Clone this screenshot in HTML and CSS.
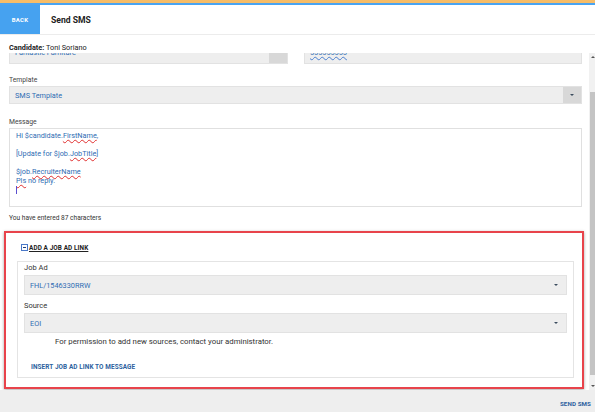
FILE: index.html
```html
<!DOCTYPE html>
<html>
<head>
<meta charset="utf-8">
<title>Send SMS</title>
<link rel="stylesheet" href="styles.css">
</head>
<body>
<div class="app">
  <header class="topbar">
    <div class="back">BACK</div>
    <h1 class="title">Send SMS</h1>
  </header>
  <div class="candidate"><b>Candidate:</b> Toni Soriano</div>
  <div class="body">
    <div class="scroll">
      <div class="content">
        <div class="row-top">
          <div class="select top"><span class="val">Fantastic Furniture</span><span class="btn"></span></div>
          <div class="select top"><span class="val"><span class="wavy-blue">555555555</span></span></div>
        </div>

        <div class="field first">
          <div class="label">Template</div>
          <div class="select tmpl"><span class="val">SMS Template</span><span class="btn"><span class="caret"></span></span></div>
        </div>

        <div class="field">
          <div class="label">Message</div>
          <div class="textarea">
            <div class="line">Hi $candidate.<span class="wavy">FirstName</span>,</div>
            <div class="line">&nbsp;</div>
            <div class="line">[Update for $job.<span class="wavy">JobTitle</span>]</div>
            <div class="line">&nbsp;</div>
            <div class="line">$job.<span class="wavy">RecruiterName</span></div>
            <div class="line"><span class="wavy">Pls</span> no reply.</div>
            <div class="line"><span class="cursor"></span></div>
          </div>
        </div>

        <div class="counter">You have entered 87 characters</div>

        <section class="highlight">
          <div class="section-head">
            <span class="minus"></span>
            <span class="section-title">ADD A JOB AD LINK</span>
          </div>
          <div class="panel">
            <div class="plabel">Job Ad</div>
            <div class="pselect"><span class="val">FHL/1546330RRW</span><span class="caret"></span></div>
            <div class="plabel src">Source</div>
            <div class="pselect"><span class="val">EOI</span><span class="caret"></span></div>
            <div class="note">For permission to add new sources, contact your administrator.</div>
            <div class="insert">INSERT JOB AD LINK TO MESSAGE</div>
          </div>
        </section>
      </div>
    </div>
    <div class="scrollbar">
      <div class="arrow up"></div>
      <div class="track"><div class="thumb"></div></div>
      <div class="arrow down"></div>
    </div>
  </div>
  <footer class="footer">
    <span class="send">SEND SMS</span>
  </footer>
</div>
</body>
</html>
```

FILE: styles.css
```css
* { box-sizing: border-box; }
html, body { margin: 0; padding: 0; }
body {
  font-family: Roboto, "Liberation Sans", Arial, sans-serif;
  color: #333;
  background: #fff;
}
.app {
  width: 595px;
  height: 412px;
  display: flex;
  flex-direction: column;
  overflow: hidden;
}
.topbar {
  display: flex;
  align-items: stretch;
  height: 35px;
  border-top: 3px solid #f7bd68;
  box-shadow: inset 0 2px 0 #4aa4f2;
  padding-top: 2px;
  border-bottom: 1px solid #ececec;
  background: #fff;
}
.back {
  width: 40px;
  background: #46a2f0;
  color: #fff;
  font-weight: 700;
  font-size: 6px;
  letter-spacing: 0.2px;
  display: flex;
  align-items: center;
  justify-content: center;
}
.title {
  margin: 0 0 0 11px;
  font-size: 8.6px;
  font-weight: 700;
  color: #222;
  display: flex;
  align-items: center;
}
.candidate {
  height: 18px;
  padding: 8px 0 0 9px;
  font-size: 7.3px;
  line-height: 9px;
  color: #222;
  background: #fff;
}
.candidate b { font-weight: 700; }
.body {
  flex: 1;
  display: flex;
  min-height: 0;
}
.scroll {
  flex: 1;
  overflow: hidden;
}
.content {
  margin-top: -12px;
  padding: 0 7px 0 9px;
}
.row-top {
  display: grid;
  grid-template-columns: 279px 1fr;
  gap: 16px;
}
.select {
  height: 20px;
  background: #eeeeee;
  border: 1px solid #e2e2e2;
  display: flex;
  align-items: center;
  font-size: 7.3px;
  color: #2f6db3;
}
.select.top { height: 23px; }
.select .val { flex: 1; padding-left: 5px; }
.select .btn {
  width: 18px;
  align-self: stretch;
  background: #d8d8d8;
  display: flex;
  align-items: center;
  justify-content: center;
}
.wavy-blue {
  text-decoration: underline wavy #4a7fd0;
  text-decoration-thickness: 0.5px;
}
.wavy {
  text-decoration: underline wavy #e03030;
  text-decoration-thickness: 0.5px;
  text-underline-offset: 1px;
}
.field.first { margin-top: 12px; }
.field { margin-top: 14px; }
.label {
  font-size: 6.8px;
  line-height: 9px;
  color: #444;
  margin-bottom: 1px;
}
.select.tmpl { height: 18px; }
.caret {
  width: 0;
  height: 0;
  border-left: 2.5px solid transparent;
  border-right: 2.5px solid transparent;
  border-top: 2.5px solid #3b4c5e;
}
.textarea {
  height: 79px;
  border: 1px solid #e0e0e0;
  padding: 2px 6px;
  font-size: 7.3px;
  line-height: 9px;
  color: #2f6db3;
}
.cursor {
  display: inline-block;
  width: 0;
  height: 8px;
  border-left: 0.8px solid #5a4fcf;
  vertical-align: middle;
}
.counter {
  margin-top: 7px;
  font-size: 6.6px;
  line-height: 9px;
  color: #333;
}
.highlight {
  margin: 8px -2px 0 -5px;
  border: 2px solid #e8434b;
  box-shadow: 0 1px 3px rgba(0,0,0,0.35);
  padding: 10px 8px 9px 11px;
  background: #fff;
}
.section-head {
  display: flex;
  align-items: center;
  height: 9px;
  padding-left: 4px;
}
.minus {
  width: 7px;
  height: 7px;
  border: 1px solid #4a78c8;
  position: relative;
  margin-right: 1px;
  margin-top: -1px;
  background: #fff;
}
.minus::after {
  content: "";
  position: absolute;
  left: 1px;
  right: 1px;
  top: 2px;
  height: 1.2px;
  background: #1d3d7a;
}
.section-title {
  font-size: 6.4px;
  font-weight: 700;
  color: #222;
  text-decoration: underline;
  text-underline-offset: 1px;
  letter-spacing: 0.1px;
}
.panel {
  margin-top: 9px;
  border: 1px solid #e4e4e4;
  padding: 1px 6px 5px 6px;
}
.plabel {
  font-size: 7.5px;
  line-height: 10px;
  color: #333;
}
.plabel.src { margin-top: 6px; }
.pselect {
  margin-top: 2px;
  height: 20px;
  background: #eeeeee;
  border: 1px solid #e2e2e2;
  display: flex;
  align-items: center;
  padding: 0 8px 0 5px;
  font-size: 7.3px;
  color: #2f6db3;
}
.pselect .val { flex: 1; }
.note {
  margin-top: 4px;
  padding-left: 31px;
  font-size: 7.8px;
  line-height: 9px;
  color: #333;
}
.insert {
  margin-top: 17px;
  padding-left: 7px;
  font-size: 6.4px;
  line-height: 9px;
  font-weight: 700;
  color: #2c5f9e;
  letter-spacing: 0.1px;
}
.scrollbar {
  width: 6px;
  background: #f1f1f1;
  display: flex;
  flex-direction: column;
  align-items: center;
  padding: 3px 0 3px 1px;
}
.arrow {
  width: 0;
  height: 0;
  border-left: 2px solid transparent;
  border-right: 2px solid transparent;
}
.arrow.up { border-bottom: 2.5px solid #555; }
.arrow.down { border-top: 2.5px solid #555; }
.track {
  flex: 1;
  width: 100%;
  padding: 34px 0 10px 0;
}
.thumb {
  height: 100%;
  background: #c4c4c4;
}
.footer {
  height: 22px;
  background: #eeeeee;
  display: flex;
  justify-content: flex-end;
  align-items: flex-start;
  padding: 10px 4px 0 0;
}
.send {
  font-size: 6.2px;
  line-height: 8px;
  font-weight: 700;
  color: #2c5f9e;
  letter-spacing: 0.1px;
}
```
